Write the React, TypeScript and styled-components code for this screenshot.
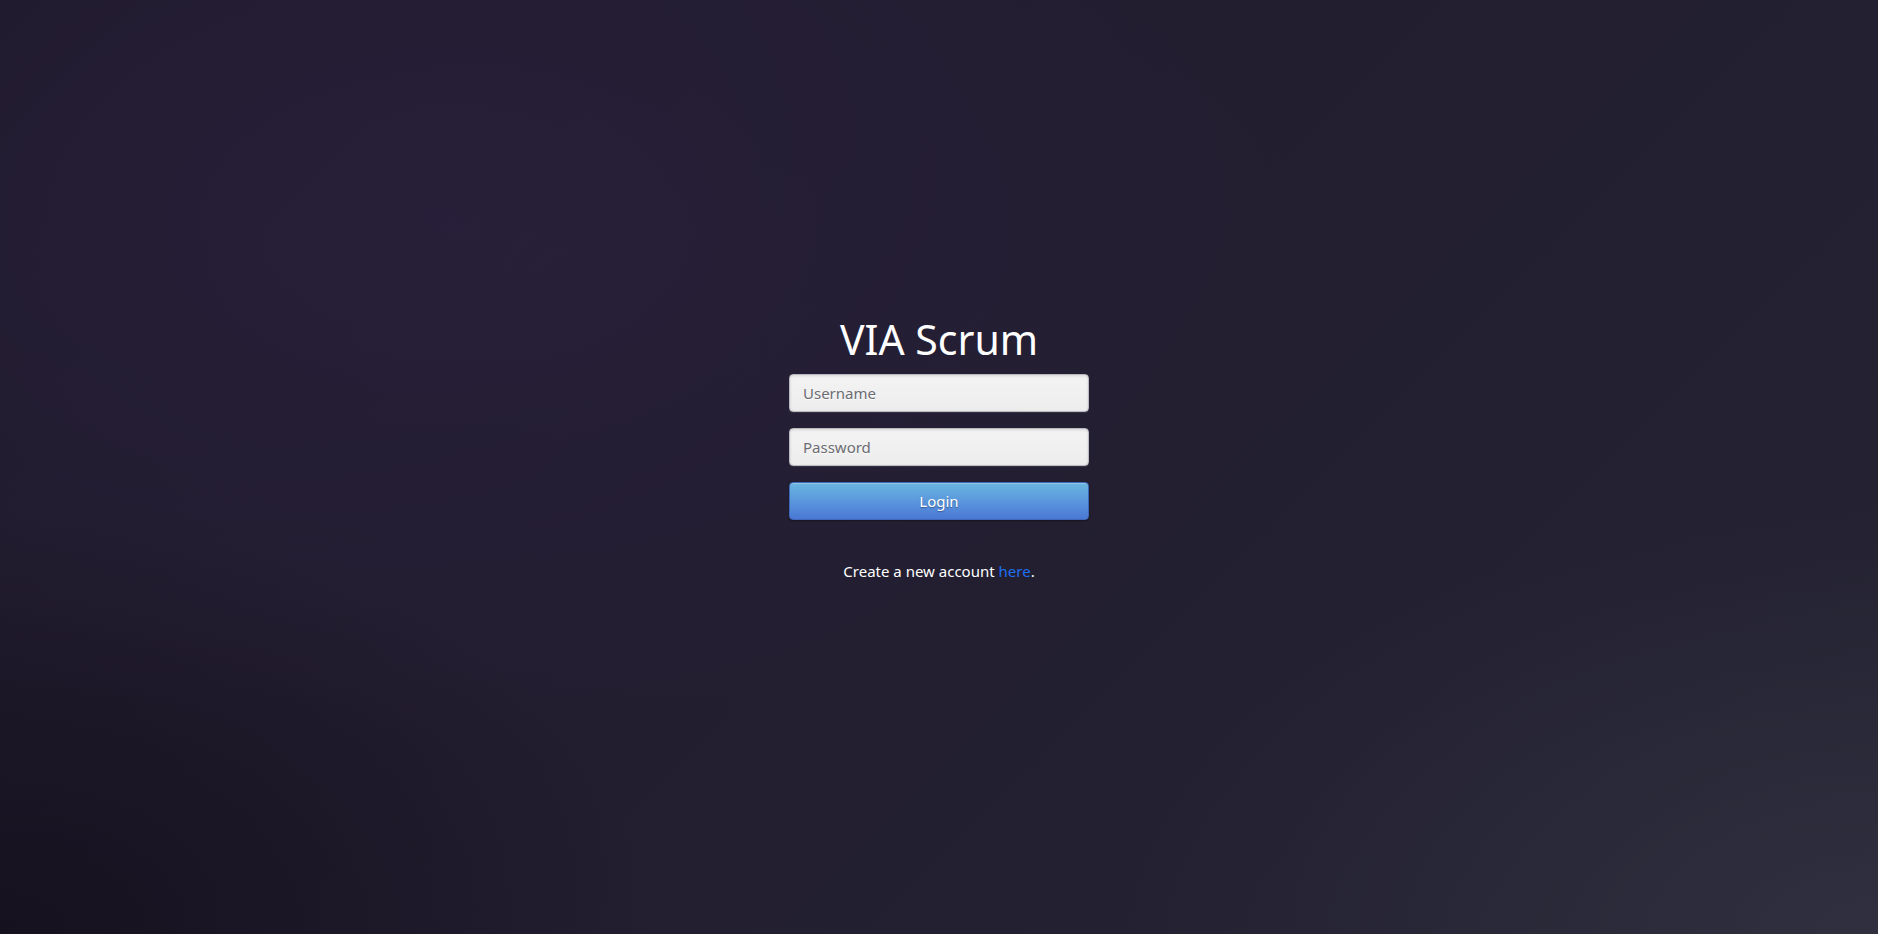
import styled, { createGlobalStyle } from "styled-components";

const GlobalStyle = createGlobalStyle`
  html, body {
    margin: 0;
    padding: 0;
    height: 100%;
  }
  body {
    font-family: "Noto Sans", "Open Sans", sans-serif;
    background-color: #201c2c;
    background-image:
      radial-gradient(ellipse 45% 55% at 24% 24%, rgba(44, 34, 66, 0.55), rgba(44, 34, 66, 0) 100%),
      radial-gradient(ellipse 40% 45% at 100% 100%, rgba(52, 52, 68, 0.7), rgba(52, 52, 68, 0) 100%),
      radial-gradient(ellipse 35% 45% at 0% 100%, rgba(18, 14, 26, 0.8), rgba(18, 14, 26, 0) 100%),
      linear-gradient(135deg, #1f1a2c 0%, #221e30 50%, #252432 100%);
  }
`;

const Page = styled.main`
  min-height: 100vh;
  display: flex;
  justify-content: center;
`;

const Form = styled.form`
  width: 300px;
  padding-top: 316px;
  display: flex;
  flex-direction: column;
  gap: 16px;
`;

const Title = styled.h1`
  margin: 0 0 -4px;
  font-size: 41px;
  line-height: 46px;
  font-weight: 400;
  color: #ffffff;
  text-align: center;
`;

const Input = styled.input`
  box-sizing: border-box;
  width: 100%;
  height: 38px;
  padding: 0 13px;
  border: 1px solid #b9b9c0;
  border-radius: 4px;
  background: linear-gradient(180deg, #f3f3f3 0%, #ededed 100%);
  box-shadow: inset 0 1px 3px rgba(0, 0, 0, 0.12), 0 1px 0 rgba(255, 255, 255, 0.08);
  font-family: inherit;
  font-size: 15px;
  color: #444;
  outline: none;

  &::placeholder {
    color: #6c6c72;
    text-shadow: 0 1px 0 rgba(255, 255, 255, 0.8);
  }
`;

const Button = styled.button`
  height: 38px;
  width: 100%;
  border: 1px solid #3f68b8;
  border-radius: 4px;
  background: linear-gradient(180deg, #6bb6e1 0%, #5a97dc 50%, #4a78d5 100%);
  box-shadow: inset 0 1px 0 rgba(255, 255, 255, 0.25), 0 1px 2px rgba(0, 0, 0, 0.35);
  color: #ffffff;
  font-family: inherit;
  font-size: 15px;
  text-shadow: 0 1px 1px rgba(0, 0, 0, 0.35);
  cursor: pointer;
`;

const Note = styled.p`
  margin: 25px 0 0;
  font-size: 15px;
  line-height: 20px;
  color: #ffffff;
  text-align: center;

  a {
    color: #1f6ff2;
    text-decoration: none;
  }
`;

export default function App() {
  return (
    <>
      <GlobalStyle />
      <Page>
        <Form onSubmit={(e) => e.preventDefault()}>
          <Title>VIA Scrum</Title>
          <Input type="text" placeholder="Username" />
          <Input type="password" placeholder="Password" />
          <Button type="submit">Login</Button>
          <Note>
            Create a new account <a href="#">here</a>.
          </Note>
        </Form>
      </Page>
    </>
  );
}
